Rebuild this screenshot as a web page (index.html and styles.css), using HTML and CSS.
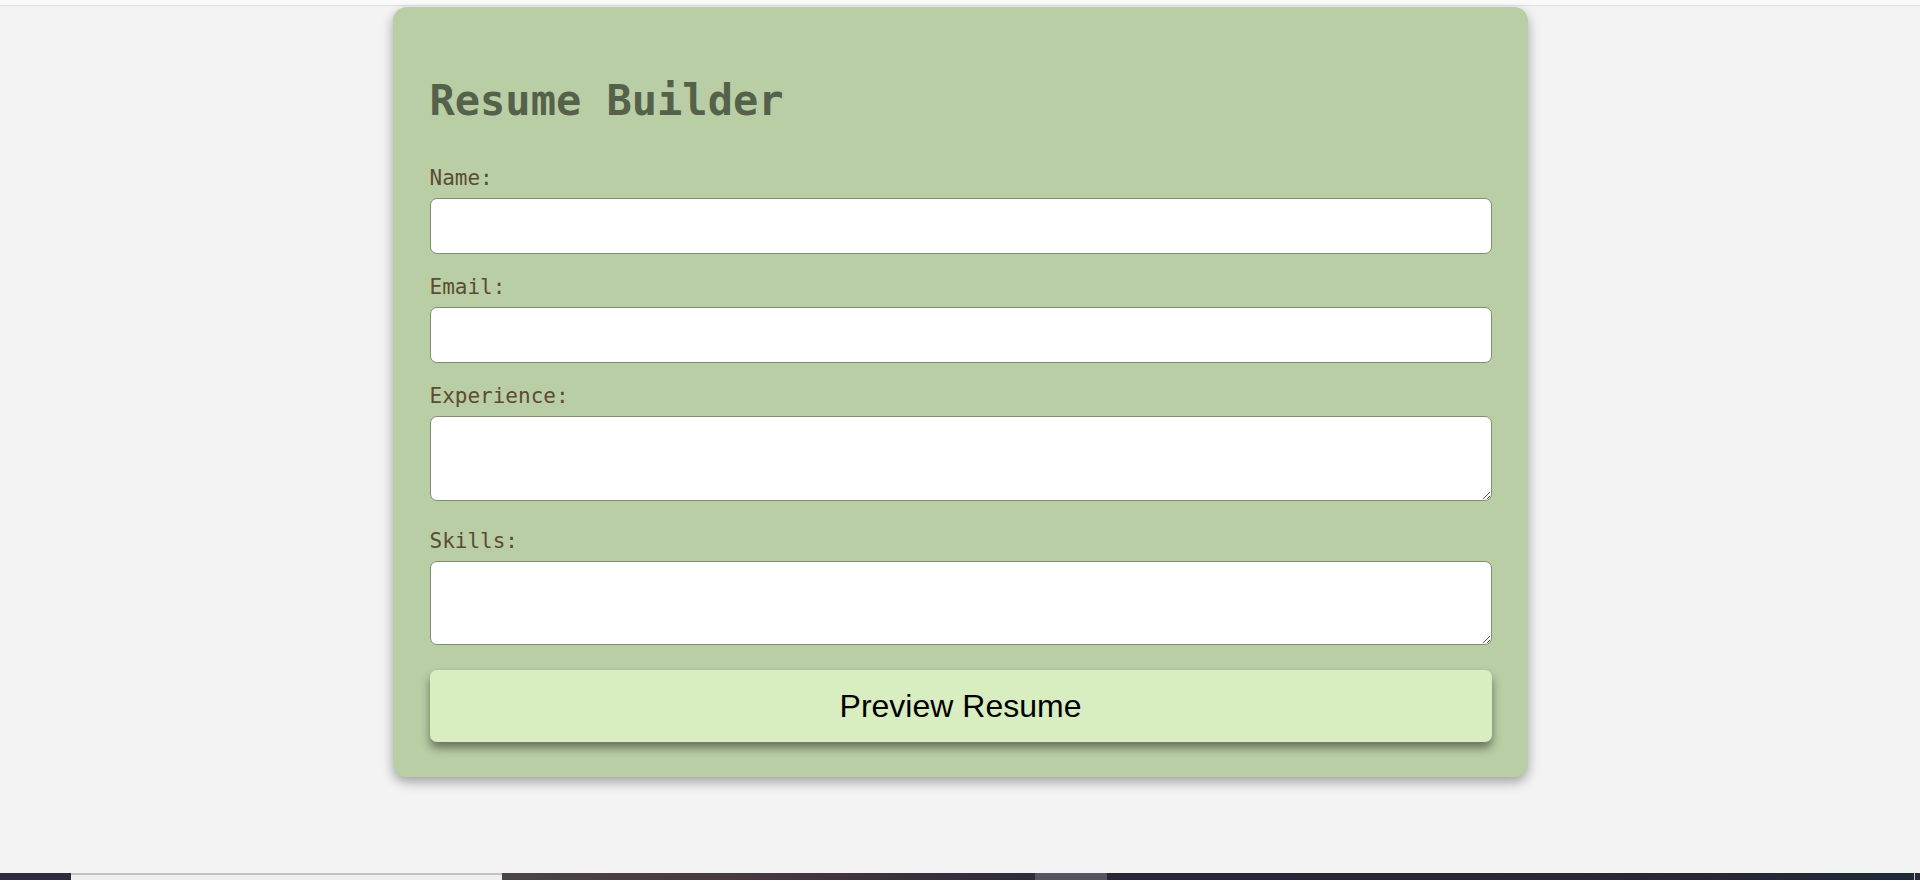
FILE: index.html
```html
<!DOCTYPE html>
<html lang="en">
<head>
<meta charset="utf-8">
<title>Resume Builder</title>
<link rel="stylesheet" href="styles.css">
</head>
<body>
<div class="chrome-edge"></div>
<main class="page">
  <form class="card">
    <h1 class="title">Resume Builder</h1>
    <label class="label" for="name">Name:</label>
    <input class="field" id="name" type="text">
    <label class="label" for="email">Email:</label>
    <input class="field" id="email" type="email">
    <label class="label" for="exp">Experience:</label>
    <textarea class="area area-exp" id="exp"></textarea>
    <label class="label" for="skills">Skills:</label>
    <textarea class="area area-skills" id="skills"></textarea>
    <button class="preview" type="button">Preview Resume</button>
  </form>
</main>
<div class="taskbar">
  <div class="tb tb-start"></div>
  <div class="tb tb-light"></div>
  <div class="tb tb-grad"></div>
  <div class="tb tb-gray"></div>
  <div class="tb tb-dark"></div>
  <div class="tb tb-end"></div>
</div>
</body>
</html>
```

FILE: styles.css
```css
* { box-sizing: border-box; }

html, body {
  margin: 0;
  padding: 0;
}

body {
  background: #f3f3f3;
  height: 880px;
  display: flex;
  flex-direction: column;
  overflow: hidden;
  font-family: "DejaVu Sans Mono", monospace;
}

.chrome-edge {
  height: 6px;
  background: #fafafa;
  border-bottom: 1px solid #dfdfdf;
  flex: none;
}

.page {
  flex: 1;
  display: flex;
  justify-content: center;
  align-items: flex-start;
  padding-top: 1px;
}

.card {
  width: 1135px;
  background: #b9cea5;
  border-radius: 14px;
  padding: 69px 36px 35px 37px;
  display: flex;
  flex-direction: column;
  box-shadow: 0 5px 12px rgba(0, 0, 0, 0.34);
}

.title {
  margin: 0 0 40px 0;
  font-family: "DejaVu Sans Mono", monospace;
  font-weight: bold;
  font-size: 42px;
  line-height: 50px;
  color: #55614a;
}

.label {
  display: block;
  font-size: 21px;
  line-height: 24px;
  color: #5c4b33;
  margin-bottom: 8px;
}

.field,
.area {
  display: block;
  width: 100%;
  background: #ffffff;
  border: 1px solid #7f8e70;
  border-radius: 7px;
  margin: 0 0 21px 0;
  font-family: "DejaVu Sans Mono", monospace;
  font-size: 16px;
}

.field {
  height: 56px;
}

.area {
  resize: vertical;
  margin-bottom: 28px;
}

.area-exp { height: 85px; }
.area-skills { height: 84px; margin-bottom: 25px; }

.preview {
  display: block;
  width: 100%;
  height: 72px;
  border: none;
  border-radius: 7px;
  background: #d8eec1;
  color: #000;
  font-family: "Liberation Sans", Arial, sans-serif;
  font-size: 32px;
  box-shadow: 0 6px 10px rgba(0, 0, 0, 0.45);
  cursor: pointer;
}

.taskbar {
  flex: none;
  height: 7px;
  display: flex;
  background: #262738;
}

.tb { height: 100%; }
.tb-start { width: 71px; background: #2b2d3e; }
.tb-light { width: 431px; background: #efefef; border-top: 2px solid #c2c2c2; }
.tb-grad { width: 533px; background: linear-gradient(90deg, #4a4448, #4a3840 45%, #2e2b3b); }
.tb-gray { width: 72px; background: #56545e; }
.tb-dark { flex: 1; background: linear-gradient(90deg, #262638, #2b2538 60%, #1f2a38); }
.tb-end { width: 6px; background: #2a2c3b; border-left: 1px solid #c8c8c8; }
```
